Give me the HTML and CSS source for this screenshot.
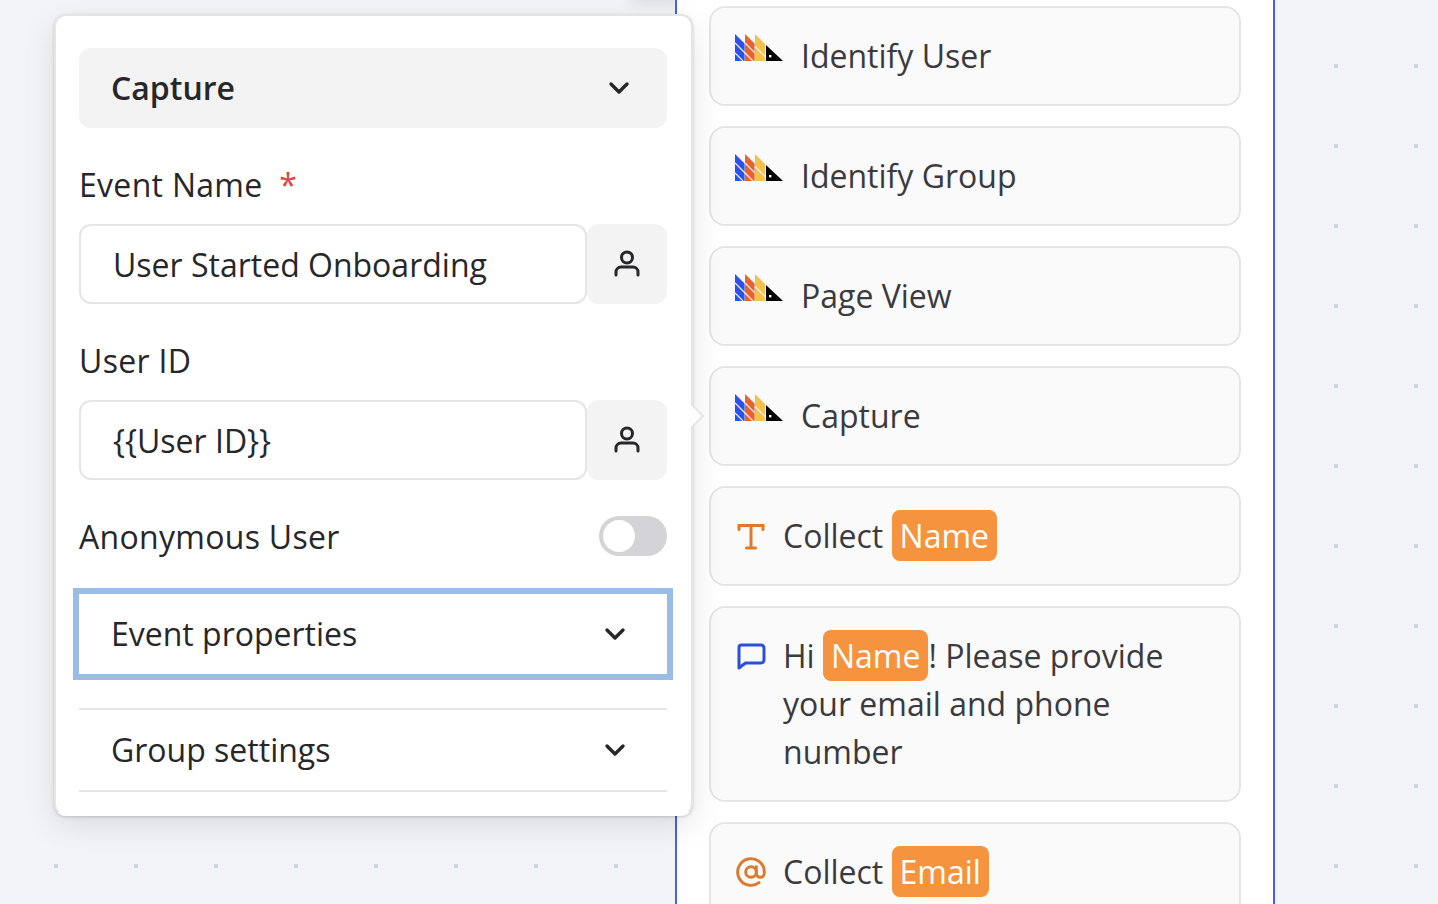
FILE: index.html
```html
<!DOCTYPE html>
<html lang="en">
    <head>
        <meta charset="utf-8">
        <title>Flow editor</title>
        <link rel="stylesheet" href="styles.css">
    </head>
    <body>
        <svg class="defs" width="0" height="0">
            <symbol id="posthog" viewBox="0 0 48 27">
                <polygon fill="#2b50f0" points="0,0 9.6,9.6 9.6,27 0,27"/>
                <polygon fill="#e9622b" points="10,0 19.6,9.6 19.6,27 10,27"/>
                <polygon fill="#f4c04f" points="20,0 30,10 30,27 20,27"/>
                <path stroke="#fafafa" stroke-width="1.1" d="M0 9L10 19M0 19L8 27M10 9L19.6 18.6M10 19L18 27M20 12.5L30 22.5"/>
                <polygon fill="#000" points="31,11 48,27 31,27"/>
                <rect fill="#fff" x="34" y="21" width="2.4" height="2.4"/>
            </symbol>
            <symbol id="user" viewBox="0 0 32 32">
                <circle cx="16" cy="9.5" r="5.5" fill="none" stroke="currentColor" stroke-width="3"/>
                <path fill="none" stroke="currentColor" stroke-width="3" stroke-linecap="round" d="M5 27v-3a5 5 0 0 1 5-5h12a5 5 0 0 1 5 5v3"/>
            </symbol>
            <symbol id="chevron" viewBox="0 0 24 24">
                <path fill="none" stroke="currentColor" stroke-width="3.4" stroke-linecap="round" stroke-linejoin="round" d="M4 8l8 8 8-8"/>
            </symbol>
        </svg>

        <div class="smear"></div>

        <div class="group">
            <div class="block">
                <svg class="logo"><use href="#posthog"/></svg>
                <span>Identify User</span>
            </div>
            <div class="block">
                <svg class="logo"><use href="#posthog"/></svg>
                <span>Identify Group</span>
            </div>
            <div class="block">
                <svg class="logo"><use href="#posthog"/></svg>
                <span>Page View</span>
            </div>
            <div class="block">
                <svg class="logo"><use href="#posthog"/></svg>
                <span>Capture</span>
            </div>
            <div class="block">
                <svg class="icon" viewBox="0 0 32 32" fill="none" stroke="#dd7a2e" stroke-width="3" stroke-linecap="round">
                    <path d="M4 9.5V5.5H28V9.5M16 5.5V28M11.5 28H20.5"/>
                </svg>
                <span>Collect <span class="tag">Name</span></span>
            </div>
            <div class="block">
                <svg class="icon" viewBox="0 0 32 32" fill="none" stroke="#2a4fdc" stroke-width="3" stroke-linejoin="round">
                    <path d="M6.5 5H26a3 3 0 0 1 3 3v12a3 3 0 0 1-3 3H10.5L4 28V7.5A2.5 2.5 0 0 1 6.5 5z"/>
                </svg>
                <span>Hi <span class="tag">Name</span>! Please provide your email and phone number</span>
            </div>
            <div class="block">
                <svg class="icon" viewBox="0 0 24 24" fill="none" stroke="#dd7a2e" stroke-width="2.2" stroke-linecap="round">
                    <circle cx="12" cy="12" r="4"/>
                    <path d="M16 8v5a3 3 0 0 0 6 0v-1a10 10 0 1 0-4 8"/>
                </svg>
                <span>Collect <span class="tag">Email</span></span>
            </div>
        </div>

        <div class="popover">
            <div class="notch"></div>
            <div class="select">
                <span>Capture</span>
                <svg class="chevron"><use href="#chevron"/></svg>
            </div>

            <label class="field-label">Event Name <span class="required">*</span></label>
            <div class="field">
                <input type="text" value="User Started Onboarding">
                <button><svg class="user-icon"><use href="#user"/></svg></button>
            </div>

            <label class="field-label">User ID</label>
            <div class="field">
                <input type="text" value="{{User ID}}">
                <button><svg class="user-icon"><use href="#user"/></svg></button>
            </div>

            <div class="switch-row">
                <span class="switch-label">Anonymous User</span>
                <span class="switch"><span class="knob"></span></span>
            </div>

            <div class="accordion focused">
                <span>Event properties</span>
                <svg class="chevron"><use href="#chevron"/></svg>
            </div>
            <div class="accordion bordered">
                <span>Group settings</span>
                <svg class="chevron"><use href="#chevron"/></svg>
            </div>
        </div>
    </body>
</html>
```

FILE: styles.css
```css
* {
    margin: 0;
    padding: 0;
    box-sizing: border-box;
}
:root {
    --bg-color: #f2f4f8;
    --dot-color: #cdd2e2;
    --fg-color: #27272a;
    --block-fg: #3a3a3f;
    --line-color: #e5e5e5;
    --field-color: #f3f3f3;
    --tag-color: #f6933f;
    --blue: #3f63f5;
}
.defs {
    position: absolute;
}
html {
    font-family: "Open Sans", sans-serif;
    font-size: 32px;
    line-height: 48px;
    color: var(--fg-color);
}
body {
    position: relative;
    height: 904px;
    overflow: hidden;
    background-color: var(--bg-color);
    background-image: radial-gradient(circle, var(--dot-color) 2px, transparent 2.5px);
    background-size: 80px 80px;
    background-position: 16px 26px;
}

/* shadow of something just above the visible area */
.smear {
    position: absolute;
    left: 630px;
    top: -30px;
    width: 50px;
    height: 30px;
    box-shadow: 0 2px 16px rgba(0, 0, 0, .12);
}

.group {
    position: relative;
    display: flex;
    flex-direction: column;
    gap: 20px;
    width: 600px;
    height: 904px;
    margin-left: 675px;
    padding: 6px 32px 0 32px;
    background-color: #fff;
    border-left: 2px solid var(--blue);
    border-right: 2px solid var(--blue);
}
.block {
    display: flex;
    flex-shrink: 0;
    gap: 16px;
    padding: 24px;
    color: var(--block-fg);
    background-color: #fafafa;
    border: 2px solid var(--line-color);
    border-radius: 16px;
}
.logo {
    flex-shrink: 0;
    width: 48px;
    height: 27px;
    margin-top: 2px;
    margin-right: 2px;
}
.icon {
    flex-shrink: 0;
    width: 32px;
    height: 32px;
    margin-top: 8px;
}
.tag {
    padding: 4px 8px;
    color: #fff;
    background-color: var(--tag-color);
    border-radius: 8px;
}

.popover {
    position: absolute;
    left: 54px;
    top: 14px;
    width: 639px;
    height: 802px;
    padding: 32px 24px 22px 23px;
    background-color: #fff;
    border: 2px solid var(--line-color);
    border-bottom-color: #fff;
    border-radius: 12px;
    box-shadow: 0 1px 3px rgba(0, 0, 0, .18), 0 10px 32px rgba(0, 0, 0, .1);
}
.notch {
    position: absolute;
    right: -10px;
    top: 392px;
    width: 16px;
    height: 16px;
    background-color: #fff;
    border-top: 2px solid var(--line-color);
    border-right: 2px solid var(--line-color);
    transform: rotate(45deg);
}
.select {
    display: flex;
    align-items: center;
    justify-content: space-between;
    height: 80px;
    padding: 0 36px 0 32px;
    font-weight: 600;
    background-color: var(--field-color);
    border-radius: 12px;
}
.chevron {
    width: 24px;
    height: 24px;
}
.field-label {
    display: block;
    margin-top: 33px;
    margin-bottom: 15px;
    letter-spacing: .3px;
}
.required {
    margin-left: 8px;
    color: #e0453d;
}
.field {
    display: flex;
    height: 80px;
}
.field input {
    flex: 1;
    min-width: 0;
    padding: 2px 32px 0;
    font: inherit;
    color: inherit;
    background-color: #fff;
    border: 2px solid var(--line-color);
    border-radius: 12px;
    outline: none;
}
.field button {
    display: flex;
    align-items: center;
    justify-content: center;
    width: 80px;
    color: var(--fg-color);
    background-color: var(--field-color);
    border: none;
    border-radius: 12px;
}
.user-icon {
    width: 32px;
    height: 32px;
}
.switch-row {
    display: flex;
    align-items: center;
    justify-content: space-between;
    height: 48px;
    margin-top: 32px;
}
.switch-label {
    padding-top: 2px;
    line-height: 46px;
    letter-spacing: .3px;
}
.switch {
    display: block;
    width: 68px;
    height: 40px;
    padding: 4px;
    background-color: #d4d4d8;
    border-radius: 20px;
}
.knob {
    display: block;
    width: 32px;
    height: 32px;
    background-color: #fff;
    border-radius: 50%;
}
.accordion {
    display: flex;
    align-items: center;
    justify-content: space-between;
    height: 80px;
    padding: 0 40px 0 32px;
}
.accordion.focused {
    margin-top: 34px;
    outline: 6px solid #9abde6;
}
.accordion.bordered {
    box-sizing: content-box;
    margin-top: 34px;
    border-top: 2px solid var(--line-color);
    border-bottom: 2px solid var(--line-color);
}
```
